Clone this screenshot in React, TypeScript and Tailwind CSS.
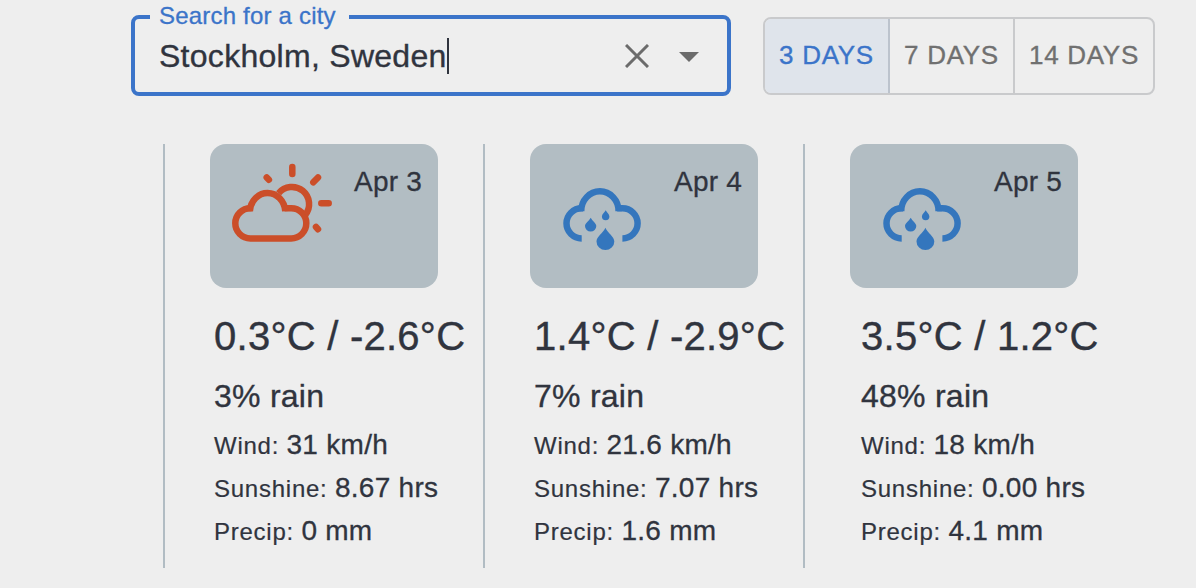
import React from "react";

type Weather = "partly-cloudy" | "rain";

interface Day {
  date: string;
  weather: Weather;
  temp: string;
  rain: string;
  wind: string;
  sunshine: string;
  precip: string;
}

const days: Day[] = [
  { date: "Apr 3", weather: "partly-cloudy", temp: "0.3°C / -2.6°C", rain: "3% rain", wind: "31 km/h", sunshine: "8.67 hrs", precip: "0 mm" },
  { date: "Apr 4", weather: "rain", temp: "1.4°C / -2.9°C", rain: "7% rain", wind: "21.6 km/h", sunshine: "7.07 hrs", precip: "1.6 mm" },
  { date: "Apr 5", weather: "rain", temp: "3.5°C / 1.2°C", rain: "48% rain", wind: "18 km/h", sunshine: "0.00 hrs", precip: "4.1 mm" },
];

function PartlyCloudyIcon() {
  return (
    <svg className="shrink-0" width="126" height="120" viewBox="0 0 126 120" fill="none" stroke="#cb4e29" strokeWidth="6.5">
      <path d="M41.6 64.2H40.4A15.1 15.1 0 0 0 40.4 94.4H81.2A15.1 15.1 0 0 0 81.2 64.2H74.6" />
      <path d="M39.8 67.2A17.8 19.6 0 0 1 75.3 67.2" />
      <path d="M68.6 49.2A16.6 16.6 0 0 1 95.2 71" />
      <path
        strokeLinecap="round"
        d="M82.3 23V30M103.3 38.3L108 33.4M111.3 59.2H118.7M106 83L108 85.2M56.7 33.4L58.9 35.7"
      />
    </svg>
  );
}

function RainIcon() {
  return (
    <svg className="shrink-0" width="126" height="120" viewBox="0 0 126 120">
      <g fill="none" stroke="#3476bd" strokeWidth="6.5">
        <path d="M51.7 94.4A15.2 15.05 0 0 1 51.7 64.3H53" />
        <path d="M51.2 67.2A18.6 19.8 0 0 1 88.6 67.2" />
        <path d="M87.2 64.3H92.4A15.2 15.05 0 0 1 92.4 94.4" />
      </g>
      <g fill="#3476bd">
        <path d="M60.7 73.7C62.2 76.7 66.3 79 66.3 82.1A5.65 5.5 0 0 1 55 82.1C55 79 59.2 76.7 60.7 73.7Z" />
        <path d="M75.7 66.3C76.7 68.5 79.4 70.3 79.4 72.5A3.75 3.7 0 0 1 71.9 72.5C71.9 70.3 74.7 68.5 75.7 66.3Z" />
        <path d="M75.4 83.7C77.8 89 84.3 92.6 84.3 97.4A8.9 8.7 0 0 1 66.5 97.4C66.5 92.6 73 89 75.4 83.7Z" />
      </g>
    </svg>
  );
}

function Row({ label, value }: { label: string; value: string }) {
  return (
    <div className="h-[43px] whitespace-nowrap text-[28px] leading-[43px] tracking-[0.27px] [-webkit-text-stroke:0.3px]">
      <span className="text-[24px] tracking-[0.75px] [-webkit-text-stroke:0.2px]">{label}: </span>
      {value}
    </div>
  );
}

function DayColumn({ day, inset }: { day: Day; inset: string }) {
  return (
    <div className="flex h-[424px] w-[320px] shrink-0 flex-col border-l-2 border-[#b1bcc3] pl-[45px]">
      <div className="flex h-36 w-[228px] shrink-0 rounded-2xl bg-[#b2bdc3]">
        {day.weather === "rain" ? <RainIcon /> : <PartlyCloudyIcon />}
        <span className="mt-4 ml-[18px] whitespace-nowrap text-[28px] leading-[44px] tracking-[0.2px] [-webkit-text-stroke:0.3px]">
          {day.date}
        </span>
      </div>
      <div className={`pt-4 ${inset}`}>
        <div className="h-16 whitespace-nowrap text-[40px] leading-[64px] tracking-[0.26px] [-webkit-text-stroke:0.4px]">{day.temp}</div>
        <div className="h-[55px] whitespace-nowrap text-[32px] leading-[57px] tracking-[0.25px] [-webkit-text-stroke:0.35px]">{day.rain}</div>
        <Row label="Wind" value={day.wind} />
        <Row label="Sunshine" value={day.sunshine} />
        <Row label="Precip" value={day.precip} />
      </div>
    </div>
  );
}

export default function App() {
  return (
    <div className="h-[588px] w-[1196px] overflow-hidden bg-[#eeeeee] font-['Liberation_Sans',Arial,sans-serif] text-[#30343e]">
      <header className="flex h-36 items-start pl-[131px]">
        <div className="relative mt-[15px] flex h-[81px] w-[600px] items-center rounded-lg border-4 border-[#3b74c9] pl-6">
          <label className="absolute -top-[17px] left-[15px] flex h-7 w-[199px] items-center whitespace-nowrap bg-[#eeeeee] pl-[9px] text-[24px] leading-7 tracking-[0.2px] text-[#3b74c9] [-webkit-text-stroke:0.3px]">
            Search for a city
          </label>
          <span className="whitespace-nowrap text-[32px] leading-10 tracking-[0.28px] [-webkit-text-stroke:0.35px]">Stockholm, Sweden</span>
          <span className="h-9 w-0.5 bg-[#30343e]" />
          <div className="ml-auto flex items-center pr-7">
            <svg width="24" height="24" viewBox="0 0 24 24" stroke="#6b6b6b" strokeWidth="3">
              <path d="M1 1L23 23M23 1L1 23" />
            </svg>
            <svg className="mt-0.5 ml-[30px]" width="20" height="10" viewBox="0 0 20 10" fill="#6b6b6b">
              <path d="M0 0H20L10 10Z" />
            </svg>
          </div>
        </div>
        <div className="mt-[17px] ml-8 flex h-[78px] w-[392px] overflow-hidden rounded-lg border-2 border-[#c9cacc] text-[26px] leading-[72px] tracking-[0.7px] text-[#707070] [-webkit-text-stroke:0.35px]">
          <button className="flex w-[125px] justify-center whitespace-nowrap border-r-2 border-[#bcc3cd] bg-[#dfe4eb] text-[#3b74c9]">3 DAYS</button>
          <button className="flex w-[125px] justify-center whitespace-nowrap border-r-2 border-[#c9cacc]">7 DAYS</button>
          <button className="flex flex-1 justify-center whitespace-nowrap">14 DAYS</button>
        </div>
      </header>
      <main className="flex pl-[163px]">
        {days.map((day, i) => (
          <DayColumn key={day.date} day={day} inset={i === 2 ? "pl-[11px]" : "pl-1"} />
        ))}
      </main>
    </div>
  );
}
